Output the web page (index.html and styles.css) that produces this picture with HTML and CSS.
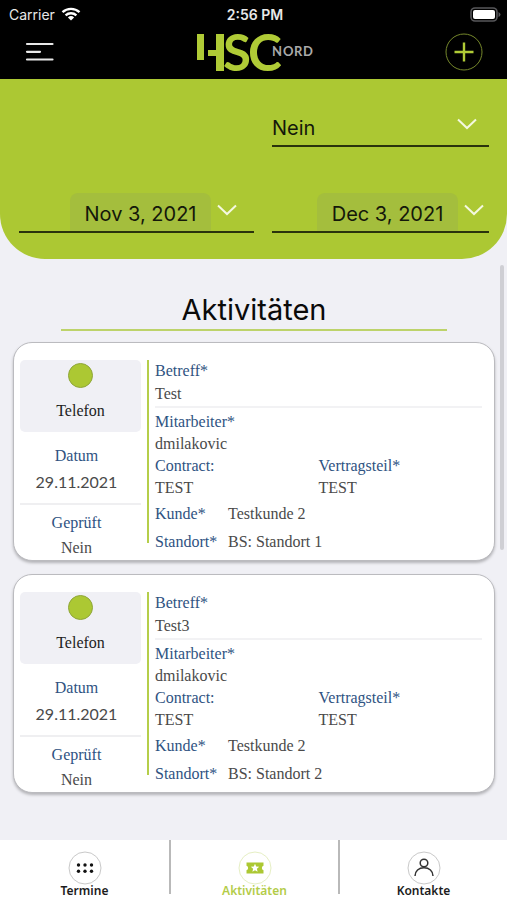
FILE: index.html
```html
<!DOCTYPE html>
<html lang="de">
<head>
<meta charset="utf-8">
<meta name="viewport" content="width=device-width, initial-scale=1">
<title>Aktivitäten</title>
<link rel="stylesheet" href="styles.css">
</head>
<body>
<div class="app">
  <header class="top">
    <div class="status">
      <div class="status-side">
        <span>Carrier</span>
        <svg width="20" height="14" viewBox="0 0 20 14" fill="none" stroke="#fff" stroke-width="2.4"><path d="M1.5 5.2a12.4 12.4 0 0 1 17 0"/><path d="M4.6 8.4a8 8 0 0 1 10.8 0"/><path d="M10 13.6 6.9 10.4a4.6 4.6 0 0 1 6.2 0z" fill="#fff" stroke="none"/></svg>
      </div>
      <strong class="clock">2:56 PM</strong>
      <div class="status-side end">
        <svg width="31" height="15" viewBox="0 0 31 15"><rect x="1" y="1" width="26" height="13" rx="4" fill="none" stroke="#57575a" stroke-width="1.6"/><rect x="3" y="3" width="22" height="9" rx="2" fill="#fff"/><path d="M28.5 5v5q2-1 2-2.500t-2-2.500z" fill="#57575a"/></svg>
      </div>
    </div>
    <div class="bar">
      <button class="icon-btn menu" aria-label="Menü">
        <svg width="30" height="20" viewBox="0 0 30 20" stroke="#e8e8e8" stroke-width="2.200" stroke-linecap="round"><path d="M3 2h25.500M3 9.800h13M3 17.500h25.500"/></svg>
      </button>
      <svg class="logo" width="116" height="40" viewBox="0 0 116 40" role="img" aria-label="HSC Nord">
        <g fill="#b0cb36"><rect x="1" y="2" width="7" height="26"/><rect x="20" y="2" width="8" height="37"/><rect x="12" y="18" width="9" height="6"/></g>
        <text class="logo-main" x="27 52" y="39">SC</text>
        <text class="logo-sub" x="76 87 98 107" y="24">NORD</text>
      </svg>
      <button class="icon-btn add" aria-label="Hinzufügen">
        <svg width="38" height="38" viewBox="0 0 38 38" fill="none" stroke="#b0cb36"><circle cx="19" cy="19" r="18" stroke="#75872b"/><path d="M19 9.500v19M9.500 19h19" stroke-width="2.400"/></svg>
      </button>
    </div>
  </header>

  <section class="filters">
    <div class="field checked">
      <select class="select" aria-label="Geprüft"><option>Nein</option></select>
      <svg class="chev" width="20" height="12" viewBox="0 0 20 12"><path d="m1 1.500 9 8.500 9-8.500"/></svg>
    </div>
    <div class="field date">
      <button class="chip">Nov 3, 2021</button>
      <svg class="chev" width="20" height="12" viewBox="0 0 20 12"><path d="m1 1.500 9 8.500 9-8.500"/></svg>
    </div>
    <div class="field date to">
      <button class="chip">Dec 3, 2021</button>
      <svg class="chev" width="20" height="12" viewBox="0 0 20 12"><path d="m1 1.500 9 8.500 9-8.500"/></svg>
    </div>
  </section>

  <main class="content">
    <h1>Aktivitäten</h1>
    <article class="card">
      <div class="side">
        <div class="kind"><span class="dot"></span><span>Telefon</span></div>
        <div class="pair datum"><span class="label">Datum</span><span class="day">29.11.2021</span></div>
        <div class="pair"><span class="label">Geprüft</span><span>Nein</span></div>
      </div>
      <div class="info">
        <div class="subject"><span class="label">Betreff*</span><span>Test</span></div>
        <div class="stack"><span class="label">Mitarbeiter*</span><span>dmilakovic</span></div>
        <div class="split">
          <div class="stack"><span class="label">Contract:</span><span>TEST</span></div>
          <div class="stack"><span class="label">Vertragsteil*</span><span>TEST</span></div>
        </div>
        <div class="row"><span class="label">Kunde*</span><span>Testkunde 2</span></div>
        <div class="row"><span class="label">Standort*</span><span>BS: Standort 1</span></div>
      </div>
    </article>
    <article class="card">
      <div class="side">
        <div class="kind"><span class="dot"></span><span>Telefon</span></div>
        <div class="pair datum"><span class="label">Datum</span><span class="day">29.11.2021</span></div>
        <div class="pair"><span class="label">Geprüft</span><span>Nein</span></div>
      </div>
      <div class="info">
        <div class="subject"><span class="label">Betreff*</span><span>Test3</span></div>
        <div class="stack"><span class="label">Mitarbeiter*</span><span>dmilakovic</span></div>
        <div class="split">
          <div class="stack"><span class="label">Contract:</span><span>TEST</span></div>
          <div class="stack"><span class="label">Vertragsteil*</span><span>TEST</span></div>
        </div>
        <div class="row"><span class="label">Kunde*</span><span>Testkunde 2</span></div>
        <div class="row"><span class="label">Standort*</span><span>BS: Standort 2</span></div>
      </div>
    </article>
    <span class="scroll-thumb"></span>
  </main>

  <nav class="tabs">
    <a href="#termine">
      <svg width="34" height="34" viewBox="0 0 34 34"><circle cx="17" cy="17" r="16" fill="#fff" stroke="#c9c9c9"/><g fill="#111"><circle cx="10.500" cy="14" r="1.700"/><circle cx="17" cy="14" r="1.700"/><circle cx="23.500" cy="14" r="1.700"/><circle cx="10.500" cy="20.300" r="1.700"/><circle cx="17" cy="20.300" r="1.700"/><circle cx="23.500" cy="20.300" r="1.700"/></g></svg>
      <span>Termine</span>
    </a>
    <a href="#aktivitaeten" class="active">
      <svg width="34" height="34" viewBox="0 0 34 34"><circle cx="17" cy="17" r="16" fill="#fff" stroke="#e6efc4"/><path fill="#acc833" d="M8.500 11.500h17v3.300a2.300 2.300 0 0 0 0 4.400v3.300h-17v-3.300a2.300 2.300 0 0 0 0-4.400z"/><path fill="#fff" d="m17 12.800 1.200 2.800 3 .2-2.300 2 .7 3-2.600-1.600-2.600 1.600.7-3-2.300-2 3-.2z"/></svg>
      <span>Aktivitäten</span>
    </a>
    <a href="#kontakte">
      <svg width="34" height="34" viewBox="0 0 34 34" fill="none" stroke="#333" stroke-width="1.500"><circle cx="17" cy="17" r="16" fill="#fff" stroke="#c9c9c9" stroke-width="1"/><circle cx="17" cy="12" r="3.800"/><path d="M8 25c0-5 3.800-8.300 9-8.300s9 3.300 9 8.300"/></svg>
      <span>Kontakte</span>
    </a>
  </nav>
</div>
</body>
</html>
```
FILE: styles.css
```css
* { box-sizing: border-box; }
body {
  margin: 0;
  background: #f0f0f5;
  font-family: Inter, "Liberation Sans", sans-serif;
}
button, select {
  font: inherit;
  color: inherit;
  border: 0;
  padding: 0;
  background: none;
}
svg { display: block; flex: none; }
.app { display: flex; flex-direction: column; min-height: 100vh; }

.top { background: #000; color: #e8e8e8; padding-bottom: 4px; }
.status {
  display: flex;
  align-items: center;
  height: 28px;
  padding: 0 6px 0 9px;
  font-size: 14px;
}
.status-side { flex: 1; display: flex; align-items: center; gap: 6px; }
.end { justify-content: flex-end; }
.clock { font-weight: 600; }
.bar {
  display: flex;
  align-items: center;
  justify-content: space-between;
  height: 47px;
  padding: 0 24px;
}
.icon-btn { display: flex; width: 38px; }
.logo { overflow: visible; }
.logo-main { font: 700 51px Lato, sans-serif; fill: #b0cb36; }
.logo-sub { font: 700 13px Lato, sans-serif; fill: #a9a9a9; }

.filters {
  display: grid;
  grid-template-columns: 235fr 217fr;
  column-gap: 18px;
  row-gap: 46px;
  padding: 28px 18px 26px 19px;
  background: #acc833;
  border-radius: 0 0 45px 45px;
  color: #14180a;
  font-size: 20px;
}
.field {
  display: flex;
  height: 40px;
  border-bottom: 2px solid #2a330c;
}
.checked { grid-column: 2; padding-right: 12px; }
.select { flex: 1; appearance: none; padding-top: 4px; }
.date { justify-content: flex-end; gap: 6px; padding-right: 17px; }
.to { padding-right: 5px; }
.chip {
  width: 141px;
  padding-top: 4px;
  border-radius: 8px 8px 0 0;
  background: #a4be3d;
}
.chev { margin-top: 11px; fill: none; stroke: #f4f8e0; stroke-width: 2; }

.content { position: relative; flex: 1; padding: 32px 12px 34px 13px; }
h1 {
  width: 80%;
  margin: 0 auto 11px;
  border-bottom: 2px solid #bdd36a;
  font: 400 29px/38px Inter, sans-serif;
  text-align: center;
  color: #0a0a0a;
}
.card {
  display: flex;
  gap: 6px;
  margin-bottom: 13px;
  padding: 17px 12px 1px 6px;
  border: 1px solid #bbbbbf;
  border-radius: 19px;
  background: #fff;
  box-shadow: 0 2px 3px #b4b4b8;
  font: 16px/22px "Liberation Serif", serif;
  color: #4a4a4a;
}
.label { color: #2f5382; }
.side { width: 121px; text-align: center; }
.kind {
  display: flex;
  flex-direction: column;
  align-items: center;
  gap: 12px;
  height: 72px;
  padding-top: 3px;
  border-radius: 5px;
  background: #f0f0f5;
  color: #222;
}
.dot {
  width: 25px;
  height: 25px;
  border: 1px solid #8fa63a;
  border-radius: 50%;
  background: #acc833;
}
.pair { display: flex; flex-direction: column; gap: 3px; padding: 7px 8px 0 0; }
.datum { gap: 4px; padding: 13px 8px 10px 0; border-bottom: 2px solid #efeff1; }
.day { font-family: Lato, sans-serif; }
.info {
  position: relative;
  flex: 1;
  padding-left: 8px;
}
.info::before {
  content: "";
  position: absolute;
  inset: 0 auto 16px 0;
  width: 2px;
  background: #b5ce4a;
}
.stack, .subject { display: flex; flex-direction: column; }
.subject { gap: 1px; margin-bottom: 3px; padding-bottom: 1px; border-bottom: 2px solid #f2f2f4; }
.split { display: grid; grid-template-columns: 1fr 1fr; margin-bottom: 4px; }
.row { display: grid; grid-template-columns: 73px 1fr; margin-bottom: 6px; }
.row:last-child { margin-bottom: 0; }
.scroll-thumb {
  position: absolute;
  top: 6px;
  right: 3px;
  width: 4px;
  height: 49%;
  border-radius: 2px;
  background: #cfcfd4;
}

.tabs {
  display: grid;
  grid-template-columns: repeat(3, 1fr);
  padding-bottom: 6px;
  background: #fff;
}
.tabs a {
  display: flex;
  flex-direction: column;
  align-items: center;
  height: 54px;
  padding-top: 11px;
  color: #1c1c1c;
  text-decoration: none;
  font: 600 12px/12px "Noto Sans", sans-serif;
}
.tabs a + a { border-left: 2px solid #b9b9b9; }
.tabs .active { color: #b3cc48; }
```
